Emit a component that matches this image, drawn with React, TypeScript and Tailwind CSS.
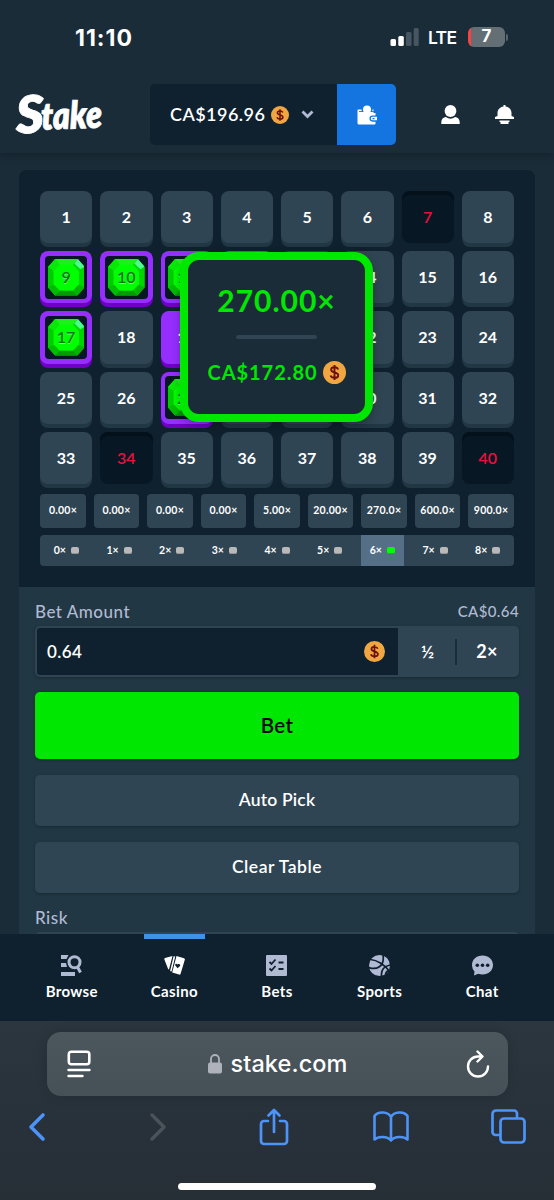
import React from "react";

type TileState = "idle" | "miss" | "hit" | "picked";

const tileStates: Record<number, TileState> = {
  7: "miss",
  9: "hit",
  10: "hit",
  11: "hit",
  12: "hit",
  17: "hit",
  19: "picked",
  27: "hit",
  34: "miss",
  40: "miss",
};

const payouts = [
  "0.00×",
  "0.00×",
  "0.00×",
  "0.00×",
  "5.00×",
  "20.00×",
  "270.0×",
  "600.0×",
  "900.0×",
];

const Coin: React.FC<{ size: number }> = ({ size }) => (
  <svg width={size} height={size} viewBox="0 0 24 24" className="shrink-0">
    <circle cx="12" cy="12" r="12" fill="#f0a742" />
    <path
      d="M15.700 8.800c-.5-1.500-1.700-2.200-3.700-2.200-2.100 0-3.500 1-3.500 2.500 0 3.900 7.400 1.900 7.400 5.900 0 1.600-1.500 2.500-3.900 2.500-2.200 0-3.600-.9-4.100-2.400M12 4.300v15.400"
      fill="none"
      stroke="#6c1108"
      strokeWidth="2"
    />
  </svg>
);

const Gem: React.FC = () => (
  <svg viewBox="0 0 36 36" className="absolute inset-[3px] h-[36.5px] w-[36.5px]">
    <path d="M7 0h22l7 8v20l-7 8H7l-7-8V8z" fill="#00d800" />
    <path d="M7 0h22l-4.500 6h-13z" fill="#1ef01e" />
    <path d="M0 8l7-8 4.500 6L6 12z" fill="#0ae80a" />
    <path d="M0 8l6 4v13l-6 3z" fill="#00cb00" />
    <path d="M36 8l-6 4v13l6 3z" fill="#00d400" />
    <path d="M0 28l6-3 5.500 6L7 36z" fill="#00bc00" />
    <path d="M36 28l-6-3-5.500 6 4.500 5z" fill="#00b400" />
    <path d="M7 36h22l-4.500-5h-13z" fill="#009c00" />
    <path d="M11.500 5.500h13L30.500 12v13l-6 6h-13l-6-6V12z" fill="#00ff00" />
    <path d="M29.500 0l6.500 7.500-4 2.500-6-5.500z" fill="#4dfa8e" />
  </svg>
);

const Tile: React.FC<{ number: number }> = ({ number }) => {
  const state = tileStates[number] ?? "idle";

  if (state === "hit") {
    return (
      <div className="flex h-[52.2px] items-center justify-center rounded-[8px] bg-[#962eff] shadow-[0_4px_0_#7100c7]">
        <div className="relative flex h-[42.5px] w-[42.5px] items-center justify-center rounded-[4px] bg-[#071824]">
          <Gem />
          <span className="relative text-[16px] font-semibold text-[#087a16] [text-shadow:0_1px_0_#72ef72]">
            {number}
          </span>
        </div>
      </div>
    );
  }

  if (state === "miss") {
    return (
      <div className="flex h-[52.2px] items-center justify-center rounded-[8px] bg-[#071824] text-[16px] font-semibold text-[#e9113c] shadow-[inset_0_4px_0_#04111b]">
        {number}
      </div>
    );
  }

  if (state === "picked") {
    return (
      <div className="flex h-[52.2px] items-center justify-center rounded-[8px] bg-[#962eff] text-[16px] text-white shadow-[0_4px_0_#7100c7]">
        {number}
      </div>
    );
  }

  return (
    <div className="flex h-[52.2px] items-center justify-center rounded-[8px] bg-[#2f4553] text-[16px] text-white shadow-[0_4px_0_#213743]">
      {number}
    </div>
  );
};

const StatusBar: React.FC = () => (
  <div className="flex h-[76px] items-start pt-[22px] pl-[75px] font-['Inter',sans-serif] text-white">
    <span className="w-[315px] text-[23px] leading-[32px] font-bold tracking-[1px]">11:10</span>
    <div className="flex h-[30px] items-center">
      <svg width="29" height="18" viewBox="0 0 29 18">
        <rect x="0.5" y="11" width="5.5" height="7" rx="1.5" fill="#fff" />
        <rect x="8.3" y="8" width="5.5" height="10" rx="1.5" fill="#fff" />
        <rect x="16" y="4" width="5.5" height="14" rx="1.5" fill="#475660" />
        <rect x="23.7" y="0" width="5" height="18" rx="1.5" fill="#475660" />
      </svg>
      <span className="mt-[2px] ml-[9px] w-[40px] text-[17.5px] font-semibold tracking-[-0.7px]">
        LTE
      </span>
      <div className="flex h-[20px] w-[37px] items-center justify-center overflow-hidden rounded-[6px] bg-linear-to-r from-[#fb4242] from-8% to-[#646f75] to-8% text-[17px] font-bold">
        7
      </div>
      <div className="ml-[1px] h-[7px] w-[2px] rounded-r-full bg-[#58656d]" />
    </div>
  </div>
);

const Header: React.FC = () => (
  <div className="flex h-[77px] items-center pl-[15px]">
    <svg width="94" height="76" viewBox="0 0 94 76" className="shrink-0">
      <text
        x="1"
        y="55"
        fill="#fff"
        stroke="#fff"
        strokeWidth="0.8"
        fontFamily="Lato, sans-serif"
        fontWeight="800"
        fontStyle="italic"
        transform="rotate(-2 45 38)"
      >
        <tspan fontSize="52" textLength="28" lengthAdjust="spacingAndGlyphs">
          S
        </tspan>
        <tspan fontSize="38" x="26" y="52" textLength="61" lengthAdjust="spacingAndGlyphs">
          take
        </tspan>
      </text>
    </svg>
    <div className="ml-[41px] flex h-[61px] w-[246px] overflow-hidden rounded-[5px]">
      <div className="flex w-[187px] items-center bg-[#0f212e] pl-[20px] text-[18px] font-semibold text-white">
        <span className="w-[101px] tracking-[0.45px] whitespace-nowrap">CA$196.96</span>
        <Coin size={18} />
        <svg width="13" height="9" viewBox="0 0 13 9" className="ml-[12px]">
          <path d="M1.500 1.500l5 5 5-5" fill="none" stroke="#b1bad3" strokeWidth="2.8" />
        </svg>
      </div>
      <div className="flex w-[59px] items-center justify-center bg-[#1475e1]">
        <svg width="20" height="20" viewBox="0 0 20 20">
          <circle cx="10" cy="4.500" r="4" fill="#fff" />
          <path
            d="M1 4.500h3.500c0 1 .3 1.800.8 2.500h9.400c.5-.7.800-1.500.8-2.500h1V8h2v10.500a1 1 0 01-1 1H2a1.500 1.500 0 01-1.500-1.500V5z"
            fill="#fff"
          />
          <path d="M2 6.500h4M14 6.500h3" stroke="#1475e1" strokeWidth="0.9" />
          <path
            d="M20 11.200h-4.500a2.400 2.400 0 000 4.800H20"
            fill="#fff"
            stroke="#1475e1"
            strokeWidth="1.3"
          />
          <path d="M15.500 13.600h2" stroke="#1475e1" strokeWidth="1.2" />
        </svg>
      </div>
    </div>
    <svg width="19" height="19" viewBox="0 0 19 19" className="ml-[45px]" fill="#fff">
      <circle cx="9.500" cy="6" r="5.900" />
      <path d="M0.300 19v-1.800c0-2.800 2-5 4.600-5.200a7.600 7.600 0 009.200 0c2.600.2 4.600 2.400 4.600 5.200V19z" />
    </svg>
    <svg width="19" height="19" viewBox="0 0 19 19" className="ml-[35px]" fill="#fff">
      <path d="M8.500 1.500V0h2v1.500c3.600.5 6 3.200 6 6.500v3l2.500 1v2H0v-2l2.500-1V8c0-3.300 2.400-6 6-6.500zM4.500 15.500h10V17h-1v2h-8v-2h-1z" />
    </svg>
  </div>
);

const WinPopup: React.FC = () => (
  <div className="absolute top-[82px] left-[161px] flex h-[170px] w-[193px] flex-col items-center rounded-[19px] border-[8px] border-[#00e701] bg-[#1a2c38] pt-[22px] text-[#00e701] shadow-[0_4px_10px_rgba(0,0,0,0.25)]">
    <div className="text-[30px] leading-[36px] font-bold tracking-[1px]">270.00×</div>
    <div className="mt-[17px] h-[4px] w-[81px] rounded-full bg-[#2f4553]" />
    <div className="mt-[21px] flex items-center gap-[5px]">
      <span className="text-[20px] leading-[24px] font-bold tracking-[0.95px]">CA$172.80</span>
      <Coin size={23} />
    </div>
  </div>
);

const GameBoard: React.FC = () => (
  <div className="relative h-[417px] rounded-t-[8px] bg-[#0f212e] px-[21px] pt-[21px] font-bold">
    <div className="grid grid-cols-8 gap-[8px]">
      {Array.from({ length: 40 }, (_, i) => (
        <Tile key={i} number={i + 1} />
      ))}
    </div>
    <div className="mt-[10px] grid grid-cols-9 gap-[7.6px]">
      {payouts.map((payout, i) => (
        <div
          key={i}
          className="flex h-[34px] items-center justify-center rounded-[4px] bg-[#2f4553] text-[10.5px] tracking-[0.25px] text-white"
        >
          {payout}
        </div>
      ))}
    </div>
    <div className="mt-[7.5px] flex h-[30.5px] rounded-[4px] bg-[#2f4553] text-[10.5px] text-white">
      {payouts.map((_, i) => (
        <div key={i} className="flex flex-1 justify-center">
          <div
            className={`flex w-[43px] items-center justify-center gap-[5px] ${
              i === 6 ? "bg-[#557086]" : ""
            }`}
          >
            {i}×
            <span
              className={`h-[7.5px] w-[8px] rounded-[2px] border-b-[1.5px] ${
                i === 6 ? "border-[#00c800] bg-[#00ff00]" : "border-[#969696] bg-[#b9b9b9]"
              }`}
            />
          </div>
        </div>
      ))}
    </div>
    <WinPopup />
  </div>
);

const BetForm: React.FC = () => (
  <div className="h-[347px] bg-[#213743] px-[16px] pt-[15px] text-white">
    <div className="flex h-[24px] items-start justify-between text-[#b1bad3]">
      <span className="text-[17px] leading-[20px] font-medium tracking-[0.5px]">Bet Amount</span>
      <span className="text-[15px] leading-[19px] font-medium tracking-[0.4px]">CA$0.64</span>
    </div>
    <div className="flex h-[51px] rounded-[5px] bg-[#2f4553] p-[2px] shadow-[0_1px_3px_rgba(0,0,0,0.25)]">
      <div className="flex w-[361px] items-center justify-between rounded-l-[3px] bg-[#0f212e] pr-[13px] pl-[10px] text-[17px] font-semibold tracking-[0.4px]">
        0.64
        <Coin size={21} />
      </div>
      <div className="flex flex-1 items-center justify-center pl-[2px] text-[18px] font-semibold">
        ½
      </div>
      <div className="h-[26px] w-[2px] self-center bg-[#1a2c38]" />
      <div className="flex w-[60px] items-center justify-center text-[18px] font-bold tracking-[0.3px]">
        2×
      </div>
    </div>
    <button className="mt-[15px] block h-[67px] w-full rounded-[5px] bg-[#00e701] text-[20.5px] font-semibold tracking-[0.3px] text-[#05080a] shadow-[0_1px_3px_rgba(0,0,0,0.25)]">
      Bet
    </button>
    <button className="mt-[15.5px] block h-[51.5px] w-full rounded-[5px] bg-[#2f4553] text-[17.5px] font-semibold tracking-[0.2px] shadow-[0_1px_3px_rgba(0,0,0,0.25)]">
      Auto Pick
    </button>
    <button className="mt-[15.5px] block h-[51.5px] w-full rounded-[5px] bg-[#2f4553] text-[17.5px] font-semibold tracking-[0.5px] shadow-[0_1px_3px_rgba(0,0,0,0.25)]">
      Clear Table
    </button>
    <div className="mt-[15px] text-[17px] leading-[20px] font-medium tracking-[0.5px] text-[#b1bad3]">
      Risk
    </div>
    <div className="mt-[4px] h-[40px] rounded-[5px] bg-[#2f4553]" />
  </div>
);

const navItems = [
  {
    label: "Browse",
    icon: (
      <>
        <path d="M0 0h7.500L5.500 4H0zM0 8h5l1 4H0zM0 17h14v4H0z" fill="#b1bad3" />
        <path
          d="M13.500 1.800a5.500 5.500 0 110 11 5.500 5.500 0 010-11zM16.500 12l3 5.500"
          fill="none"
          stroke="#b1bad3"
          strokeWidth="3"
        />
      </>
    ),
  },
  {
    label: "Casino",
    icon: (
      <>
        <path d="M1 3L8.500 1 5 14.500a1 1 0 01-1-.8L.3 4.200A1 1 0 011 3zM9.600 1.200l1.600.3L7.600 16.500l-1.500-.5z" fill="#fff" />
        <path
          d="M12.500 1l7.500 2.300a1.200 1.200 0 01.8 1.500l-4.200 14a1.200 1.200 0 01-1.500.8l-6.900-2.100z"
          fill="#fff"
        />
        <path
          d="M13.600 13.300l-2.300-2.800c-.8-1.500 1.200-2.600 2.300-1.100 1.500-1.300 3.400.2 2.400 1.600z"
          fill="#0f212e"
        />
      </>
    ),
  },
  {
    label: "Bets",
    icon: (
      <>
        <rect width="21" height="21" rx="1" fill="#b1bad3" />
        <path
          d="M3.500 7l2 2 4-4.500M3.500 13.500l2 2 4-4.500M12.500 7.500h5M12.500 14h5"
          fill="none"
          stroke="#0f212e"
          strokeWidth="1.8"
        />
      </>
    ),
  },
  {
    label: "Sports",
    icon: (
      <>
        <circle cx="10.500" cy="10.500" r="10.500" fill="#b1bad3" />
        <path
          d="M1.500 4.500C8 5 16 10 21 17M0 12.500c7 2.500 16-.5 14-12.500M12.500 21c-.5-5 2-9.500 8.500-11M16.500 19.500c.2-2 1.500-3.500 3.500-4.500"
          fill="none"
          stroke="#0f212e"
          strokeWidth="1.7"
        />
      </>
    ),
  },
  {
    label: "Chat",
    icon: (
      <>
        <path
          d="M10.500.5C16.500.5 21 4.500 21 10s-4.500 9.500-10.500 9.500c-1.500 0-3-.2-4.200-.7L2 20.500l.5-4A9 9 0 010 10C0 4.500 4.500.5 10.500.5z"
          fill="#b1bad3"
        />
        <circle cx="5.300" cy="10.300" r="1.800" fill="#0f212e" />
        <circle cx="10.500" cy="10.300" r="1.800" fill="#0f212e" />
        <circle cx="15.700" cy="10.300" r="1.800" fill="#0f212e" />
      </>
    ),
  },
];

const BottomNav: React.FC = () => (
  <div className="flex h-[87px] shrink-0 bg-[#0f212e] px-[20.5px] text-white">
    {navItems.map((item, i) => (
      <div key={item.label} className="flex flex-1 flex-col items-center">
        <div className={`h-[5px] w-[61.5px] ${i === 1 ? "bg-[#4391e7]" : ""}`} />
        <svg width="21" height="21" viewBox="0 0 21 21" className="mt-[16px]">
          {item.icon}
        </svg>
        <span className="mt-[5px] text-[15px] leading-[20px] font-bold tracking-[0.35px]">
          {item.label}
        </span>
      </div>
    ))}
  </div>
);

const BrowserBar: React.FC = () => (
  <div className="h-[179px] shrink-0 bg-linear-to-b from-[#2b363e] to-[#262e36] pt-[11px]">
    <div className="mx-auto flex h-[64px] w-[461px] items-center rounded-[14px] bg-linear-to-b from-[#4b565d] to-[#465057] pr-[18px] pl-[20px] text-white shadow-[0_0_12px_rgba(0,0,0,0.15)]">
      <svg
        width="24"
        height="28"
        viewBox="0 0 24 28"
        fill="none"
        stroke="#fff"
        strokeLinecap="round"
      >
        <rect x="1.800" y="1.800" width="20.500" height="12.500" rx="2.500" strokeWidth="2.6" />
        <path d="M1.500 20h21M1.500 26h14" strokeWidth="2.4" />
      </svg>
      <div className="flex flex-1 items-center justify-center">
        <svg width="14" height="20" viewBox="0 0 14 20">
          <path d="M3 9V5a4 4 0 018 0v4" fill="none" stroke="#afb1bb" strokeWidth="1.8" />
          <rect x="0" y="8.500" width="14" height="11" rx="2" fill="#afb1bb" />
        </svg>
        <span className="ml-[8px] font-['Inter',sans-serif] text-[23.5px] font-medium tracking-[0.1px]">
          stake.com
        </span>
      </div>
      <svg
        width="24"
        height="28"
        viewBox="0 0 24 28"
        fill="none"
        stroke="#fff"
        strokeWidth="2.4"
        strokeLinecap="round"
        strokeLinejoin="round"
      >
        <path d="M15.500 6.500H12A10 10 0 1022 16.500M11.500 1.500l5 5-5 5" />
      </svg>
    </div>
    <div className="mt-[10px] flex h-[41px] items-center justify-between pr-[28px] pl-[20px] text-[#4d93f8]">
      <div className="flex w-[36px] justify-center">
        <svg
          width="20"
          height="30"
          viewBox="0 0 20 30"
          fill="none"
          stroke="currentColor"
          strokeWidth="3.6"
          strokeLinecap="round"
          strokeLinejoin="round"
        >
          <path d="M15 3L3 15l12 12" />
        </svg>
      </div>
      <div className="flex w-[36px] justify-center pl-[4px]">
        <svg
          width="20"
          height="30"
          viewBox="0 0 20 30"
          fill="none"
          stroke="#4b5259"
          strokeWidth="3.4"
          strokeLinecap="round"
          strokeLinejoin="round"
        >
          <path d="M4 3l12 12L4 27" />
        </svg>
      </div>
      <div className="flex w-[36px] justify-center">
        <svg
          width="30"
          height="38"
          viewBox="0 0 30 38"
          fill="none"
          stroke="currentColor"
          strokeWidth="2.7"
          strokeLinecap="round"
          strokeLinejoin="round"
        >
          <path d="M9 13H5a3 3 0 00-3 3v17a3 3 0 003 3h20a3 3 0 003-3V16a3 3 0 00-3-3h-4M15 24V2M9.500 7.500L15 2l5.500 5.500" />
        </svg>
      </div>
      <svg
        width="36"
        height="32"
        viewBox="0 0 36 32"
        fill="none"
        stroke="currentColor"
        strokeWidth="2.6"
        strokeLinejoin="round"
      >
        <path d="M18 6c-3-5.500-13-6-16.500-1V28.500c4-3.500 12.500-3.500 16.500 1 4-4.500 12.500-4.500 16.500-1V5C31 0 21 .5 18 6zM18 6v23.500" />
      </svg>
      <svg
        width="35"
        height="35"
        viewBox="0 0 35 35"
        fill="none"
        stroke="currentColor"
        strokeWidth="2.7"
        strokeLinejoin="round"
      >
        <path d="M9 26H4.500a3 3 0 01-3-3V5a3.500 3.500 0 013.500-3.500h18A3 3 0 0126 4.500V9" />
        <rect x="9.500" y="9.500" width="24" height="24" rx="3.500" />
      </svg>
    </div>
    <div className="mx-auto mt-[36px] h-[7px] w-[198px] rounded-full bg-white" />
  </div>
);

const App: React.FC = () => {
  return (
    <div className="flex h-[1200px] w-[554px] flex-col overflow-hidden bg-[#1a2c38] font-['Lato',sans-serif]">
      <div className="relative h-[153px] shrink-0 bg-[#1a2c38] shadow-[0_3px_8px_rgba(0,0,0,0.2)]">
        <StatusBar />
        <Header />
      </div>
      <div className="h-[781px] shrink-0 overflow-hidden px-[19px] pt-[17px]">
        <GameBoard />
        <BetForm />
      </div>
      <BottomNav />
      <BrowserBar />
    </div>
  );
};

export default App;
